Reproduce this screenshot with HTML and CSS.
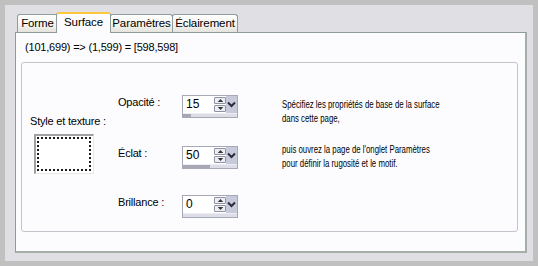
FILE: index.html
```html
<!DOCTYPE html>
<html>
<head>
<meta charset="utf-8">
<link rel="stylesheet" href="styles.css">
</head>
<body>
<div class="frame">
  <div class="dialog">
    <div class="tabs">
      <div class="tab t1">Forme</div>
      <div class="tab sel">Surface</div>
      <div class="tab t3">Paramètres</div>
      <div class="tab t4">Éclairement</div>
    </div>
    <div class="panel">
      <div class="coords">(101,699) =&gt; (1,599) = [598,598]</div>
      <div class="group">
        <div class="colstyle">
          <div class="stylelabel">Style et texture :</div>
          <div class="swatch"><div class="dots"></div></div>
        </div>
        <div class="colfields">
          <div class="row r1">
            <div class="lbl">Opacité :</div>
            <div class="spin">
              <div class="spintop">
                <div class="val">15</div>
                <div class="arrows">
                  <div class="ab"><svg width="9" height="6" viewBox="0 0 9 6"><path d="M4.5 1 L1 5 H8 Z" fill="#333"/></svg></div>
                  <div class="ab"><svg width="9" height="6" viewBox="0 0 9 6"><path d="M1 1 H8 L4.5 5 Z" fill="#333"/></svg></div>
                </div>
                <div class="drop"><svg width="9" height="7" viewBox="0 0 9 7"><path d="M1 1.5 L4.5 5 L8 1.5" stroke="#2a2a3a" stroke-width="2" fill="none"/></svg></div>
              </div>
              <div class="bar"><div class="fill" style="width:15%"></div></div>
            </div>
          </div>
          <div class="row r2">
            <div class="lbl">Éclat :</div>
            <div class="spin">
              <div class="spintop">
                <div class="val">50</div>
                <div class="arrows">
                  <div class="ab"><svg width="9" height="6" viewBox="0 0 9 6"><path d="M4.5 1 L1 5 H8 Z" fill="#333"/></svg></div>
                  <div class="ab"><svg width="9" height="6" viewBox="0 0 9 6"><path d="M1 1 H8 L4.5 5 Z" fill="#333"/></svg></div>
                </div>
                <div class="drop"><svg width="9" height="7" viewBox="0 0 9 7"><path d="M1 1.5 L4.5 5 L8 1.5" stroke="#2a2a3a" stroke-width="2" fill="none"/></svg></div>
              </div>
              <div class="bar"><div class="fill" style="width:50%"></div></div>
            </div>
          </div>
          <div class="row r3">
            <div class="lbl">Brillance :</div>
            <div class="spin">
              <div class="spintop">
                <div class="val">0</div>
                <div class="arrows">
                  <div class="ab"><svg width="9" height="6" viewBox="0 0 9 6"><path d="M4.5 1 L1 5 H8 Z" fill="#333"/></svg></div>
                  <div class="ab"><svg width="9" height="6" viewBox="0 0 9 6"><path d="M1 1 H8 L4.5 5 Z" fill="#333"/></svg></div>
                </div>
                <div class="drop"><svg width="9" height="7" viewBox="0 0 9 7"><path d="M1 1.5 L4.5 5 L8 1.5" stroke="#2a2a3a" stroke-width="2" fill="none"/></svg></div>
              </div>
              <div class="bar"><div class="fill" style="width:0%"></div></div>
            </div>
          </div>
        </div>
        <div class="coltext">
          <p class="p1">Spécifiez les propriétés de base de la surface<br>dans cette page,</p>
          <p class="p2">puis ouvrez la page de l'onglet Paramètres<br>pour définir la rugosité et le motif.</p>
        </div>
      </div>
    </div>
  </div>
</div>
</body>
</html>
```
FILE: styles.css
```css
html, body { margin: 0; padding: 0; }
body {
  width: 538px; height: 266px;
  background: #c0c0c0;
  font-family: "Liberation Sans", Arial, sans-serif;
  font-size: 11px;
  letter-spacing: -0.2px;
  color: #000;
  overflow: hidden;
}
.frame { padding: 5px; box-sizing: border-box; width: 538px; height: 266px; }
.dialog {
  width: 528px; height: 256px;
  background: #e0dfe3;
  padding: 7px 6px 8px 10px;
  box-sizing: border-box;
  display: flex; flex-direction: column;
}
.tabs {
  display: flex; align-items: flex-end;
  height: 20px;
  padding-left: 2px;
  position: relative; z-index: 1;
}
.tab {
  height: 18px; box-sizing: border-box;
  border: 1px solid #919b9c; border-bottom: none;
  border-radius: 3px 3px 0 0;
  background: linear-gradient(#ffffff, #f3f3ef 60%, #e4e3dc);
  font-size: 11.5px; line-height: 17px;
  letter-spacing: -0.1px;
  text-align: center;
  margin-right: -1px;
}
.t1 { width: 41px; }
.t3 { width: 63px; }
.t4 { width: 66px; }
.tab.sel {
  width: 55px;
  height: 21px;
  margin-bottom: -1px;
  background: #fcfcfe;
  border-top: 2px solid #ffc83c;
  line-height: 17px;
  margin-left: -1px;
  margin-right: -2px;
  position: relative; z-index: 2;
}
.tab.sel + .tab { margin-left: 1px; }
.panel {
  flex: 1;
  background: #fcfcfe;
  border: 1px solid #919b9c;
  border-right: 2px solid #a5aea9;
  border-bottom: 2px solid #a5aea9;
  padding: 6px 7px 19px 5px;
  display: flex; flex-direction: column;
}
.coords { height: 16px; line-height: 16px; padding-left: 4px; margin-bottom: 7px; }
.group {
  flex: 1;
  border: 1px solid #c6c2cc;
  border-radius: 3px;
  display: flex;
}
.colstyle { width: 96px; display: flex; flex-direction: column; padding-top: 51px; box-sizing: border-box; }
.stylelabel { height: 14px; line-height: 14px; padding-left: 8px; white-space: nowrap; }
.swatch {
  margin: 6px 0 0 12px;
  width: 60px; height: 40px; box-sizing: border-box;
  background: #fff;
  border-top: 2px solid #a0a0a0;
  border-left: 2px solid #a0a0a0;
  border-right: 1px solid #e8e8e8;
  border-bottom: 1px solid #e8e8e8;
  padding: 1px 2px 2px 1px;
}
.dots { width: 100%; height: 100%; box-sizing: border-box; border: 2px dotted #1a1a1a; }
.colfields { width: 164px; display: flex; flex-direction: column; padding-top: 32px; box-sizing: border-box; }
.row { display: flex; height: 23px; }
.r2 { margin-top: 28px; }
.r3 { margin-top: 26px; }
.lbl { width: 64px; line-height: 14px; }
.spin {
  width: 56px; height: 23px; box-sizing: border-box;
  border: 1px solid #a5a9b5;
  background: #fff;
  display: flex; flex-direction: column;
}
.spintop { display: flex; height: 17px; }
.val { flex: 1; font-size: 12px; line-height: 17px; padding-left: 3px; letter-spacing: 0; }
.arrows { width: 12px; display: flex; flex-direction: column; padding-top: 1px; }
.ab {
  height: 7px; box-sizing: border-box;
  border: 1px solid #8f93a3; border-radius: 1px;
  background: #eceef4;
  display: flex; align-items: center; justify-content: center;
  margin-bottom: 1px;
}
.ab svg { display: block; width: 7px; height: 5px; }
.drop {
  width: 11px; background: #c7cadb;
  display: flex; align-items: center; justify-content: center;
}
.bar { height: 4px; background: #dcdde6; border-top: 1px solid #ecedf2; }
.fill { height: 100%; background: #a7a8b3; }
.coltext {
  flex: 1; padding-top: 34px;
  letter-spacing: 0;
}
.coltext p {
  margin: 0; line-height: 14px;
  white-space: nowrap;
  transform: scaleX(0.71);
  transform-origin: 0 0;
}
.p2 { margin-top: 17px !important; }
```
